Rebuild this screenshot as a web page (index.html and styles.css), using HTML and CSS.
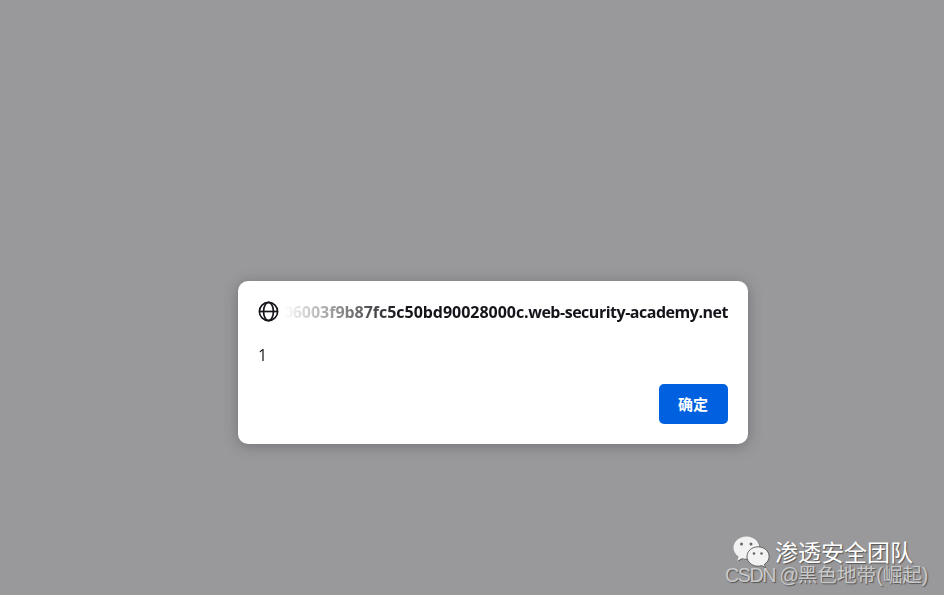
FILE: index.html
```html
<!DOCTYPE html>
<html lang="zh-CN">
<head>
<meta charset="utf-8">
<title>Alert</title>
<link rel="stylesheet" href="styles.css">
</head>
<body>
<main class="backdrop">
  <section class="dialog" role="alertdialog">
    <header class="dialog-header">
      <svg class="globe" viewBox="0 0 20 20" fill="none" stroke="#15141a" stroke-width="1.6">
        <circle cx="10" cy="10" r="8.700"/>
        <ellipse cx="10" cy="10" rx="4.700" ry="8.700"/>
        <path d="M1.500 10h17"/>
      </svg>
      <div class="origin"><span class="subdomain">06003f9b87fc5c50bd90028000c</span><span class="domain">.web-security-academy.net</span></div>
    </header>
    <p class="message">1</p>
    <footer class="actions"><button class="confirm">确定</button></footer>
  </section>
</main>
<div class="team-mark">
  <svg class="wechat" viewBox="0 0 37 33">
    <path fill="#555" transform="translate(.7 .8)" d="M13.500.5C6.300.5.500 5.500.500 11.800c0 3.700 2 6.900 5.100 8.900L4.300 24.700l4.900-2.500c1.400.4 2.800.6 4.300.6 7.200 0 13-4.800 13-11S20.700.5 13.500.5Z"/>
    <path fill="#f2f2f2" d="M13.500.5C6.300.5.500 5.500.500 11.800c0 3.700 2 6.900 5.100 8.900L4.300 24.700l4.900-2.500c1.400.4 2.800.6 4.300.6 7.200 0 13-4.800 13-11S20.700.5 13.500.5Z"/>
    <path fill="#f2f2f2" stroke="#555" stroke-width=".9" d="M25 10.800c-6.100 0-11 4.300-11 9.700s4.900 9.700 11 9.700c1.300 0 2.500-.2 3.700-.6l3.700 2-1-3.300c2.900-1.700 4.700-4.600 4.700-7.800 0-5.400-5-9.700-11.100-9.700Z"/>
    <g fill="#666"><circle cx="8.500" cy="8" r="1.500"/><circle cx="18" cy="8" r="1.500"/><circle cx="21" cy="17.500" r="1.300"/><circle cx="28.500" cy="17.500" r="1.300"/></g>
  </svg>
  <span class="team-name">渗透安全团队</span>
</div>
<div class="author-mark"><span class="latin">CSDN @</span>黑色地带(崛起)</div>
</body>
</html>
```

FILE: styles.css
```css
* { box-sizing: border-box; }
body {
  margin: 0;
  height: 595px;
  overflow: hidden;
  position: relative;
  background: #99999b;
  font-family: "Open Sans", "Noto Sans CJK SC", sans-serif;
  color: #15141a;
}
.backdrop { padding: 281px 0 0 238px; }
.dialog {
  width: 510px;
  height: 163px;
  padding: 20px;
  border-radius: 10px;
  background: #fff;
  box-shadow: 0 2px 14px rgba(58, 57, 68, .4);
}
.dialog-header { display: flex; align-items: center; gap: 5px; height: 21px; }
.globe { flex: none; width: 21px; height: 21px; }
.origin {
  flex: 1;
  display: flex;
  justify-content: flex-end;
  overflow: hidden;
  white-space: nowrap;
  font-size: 16px;
  font-weight: 700;
  line-height: 22px;
  mask-image: linear-gradient(to right, transparent, #000 115px);
}
.subdomain { letter-spacing: -.03px; }
.domain { letter-spacing: -.48px; }
.message { margin: 22px 0 0; font-size: 16px; line-height: 22px; opacity: .99; }
.actions { display: flex; justify-content: flex-end; margin-top: 18px; }
.confirm {
  width: 69px;
  height: 40px;
  padding: 0 1px 0 0;
  border: 0;
  border-radius: 5px;
  background: #0061e0;
  color: #fff;
  font: 700 15px/40px "Noto Sans CJK SC", sans-serif;
}
.team-mark {
  position: absolute;
  left: 733px;
  top: 536px;
  display: flex;
  gap: 5px;
}
.wechat { width: 37px; height: 33px; }
.team-name {
  font: 23px/31px "Noto Sans CJK SC", sans-serif;
  color: #fff;
  text-shadow: 1px 1px 1px #555;
  white-space: nowrap;
}
.author-mark {
  position: absolute;
  left: 725px;
  top: 561px;
  font: 19.600px/28px "Liberation Sans", "Noto Sans CJK SC", sans-serif;
  color: #c9c9ca;
  text-shadow: 1px 1px 1px #555;
  white-space: nowrap;
}
.latin { letter-spacing: -1.35px; }
```
